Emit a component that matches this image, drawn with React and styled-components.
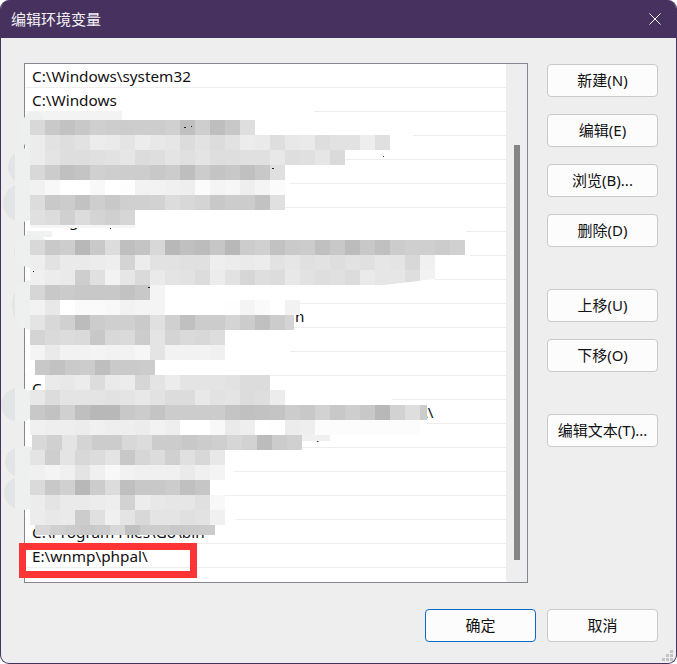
import React from "react";
import styled, { createGlobalStyle } from "styled-components";

const Global = createGlobalStyle`
  html, body { margin: 0; padding: 0; background: #fff; }
  body { font-family: "Noto Sans", "Noto Sans CJK SC", sans-serif; }
`;

const Window = styled.div`
  position: relative;
  width: 677px;
  height: 664px;
  box-sizing: border-box;
  border: 1px solid #47325f;
  border-top: 0;
  border-radius: 9px;
  background: #eeeeee;
  overflow: hidden;
  display: flex;
  flex-direction: column;
`;

const TitleBar = styled.div`
  height: 38px;
  margin: 0 -1px;
  flex: none;
  background: #47325f;
  color: #f4f2f6;
  display: flex;
  align-items: center;
  justify-content: space-between;
  padding: 0 16px 0 11px;
  font: 15px/20px "Noto Sans CJK SC", sans-serif;
`;

const Body = styled.div`
  display: grid;
  grid-template-columns: 504px 111px;
  column-gap: 19px;
  padding: 25px 0 0 23px;
`;

const ListBox = styled.div`
  height: 520px;
  box-sizing: border-box;
  border: 1px solid #84878d;
  background: #fff;
  display: grid;
  grid-template-columns: 1fr 21px;
  overflow: hidden;
`;

const Rows = styled.div`
  display: flex;
  flex-direction: column;
  min-width: 0;
  overflow: hidden;
`;

const Row = styled.div`
  height: 24px;
  flex: none;
  box-sizing: border-box;
  border-bottom: 1px solid #eeeeee;
  padding-left: ${(p) => p.$indent}px;
  font: 15.3px/25px "Noto Sans", sans-serif;
  color: #111;
  white-space: nowrap;
`;

const Track = styled.div`
  background: #eeeeee;
  display: flex;
  justify-content: center;
  padding-top: 81px;
`;

const Thumb = styled.div`
  width: 6px;
  height: 415px;
  background: #858585;
`;

const Side = styled.div`
  display: flex;
  flex-direction: column;
  padding-top: 1px;
`;

const Btn = styled.button`
  width: 111px;
  height: 33px;
  flex: none;
  margin-top: ${(p) => p.$gap}px;
  box-sizing: border-box;
  padding: 0 0 2px;
  border-radius: 4px;
  border: 1px solid ${(p) => (p.$primary ? "#0a6cc4" : "#c9c9c9")};
  background: #fcfcfc;
  color: #111;
  font: 15px/20px "Noto Sans", "Noto Sans CJK SC", sans-serif;
`;

const Footer = styled.div`
  display: flex;
  justify-content: flex-end;
  gap: 11px;
  padding: 26px 18px 0 0;
`;

const Highlight = styled.div`
  position: absolute;
  left: 18px;
  top: 543px;
  width: 178px;
  height: 35px;
  box-sizing: border-box;
  border: 7px solid #ff3535;
`;

const Mosaic = styled.svg`
  position: absolute;
  left: -1px;
  top: 0;
  pointer-events: none;
`;

const Grip = styled.svg`
  position: absolute;
  right: 2px;
  bottom: 1px;
`;

const items = [
  ["C:\\Windows\\system32", 7],
  ["C:\\Windows", 7],
  ["", 7], ["", 7], ["", 7], ["", 7],
  ["g", 44],
  ["", 7],
  ["", 7],
  ["", 7],
  ["n", 270],
  ["", 7], ["", 7],
  ["C", 7],
  ["\\\\", 397],
  ["\\", 288],
  ["", 7], ["", 7], ["", 7],
  ["C:\\Program Files\\Go\\bin", 7],
  ["E:\\wnmp\\phpal\\", 7],
  ["", 7],
];

// Pixelated redaction: [top, first cell x, height, grey tones of the 15px cells]
const bands = [
  [120, 30, 15, "d8 c9 c2 c8 cf cd cc cd cd d0 c0 ce be c8 de"],
  [135, 30, 15, "ec e2 de e2 ec ea e4 ec e8 e6 dc e2 dc e2 ec ea de e8 ea de e2 e2 ee e0"],
  [150, 30, 15, "ec e4 de de e0 e2 e6 dc de e4 e0 e4 de de e0 e0 e8 de e0 e6 da"],
  [165, 30, 15, "d8 cc c0 c4 d0 ce cd cd c8 cc be cc c4 c8 c0 c8 e0"],
  [180, 30, 15, "f1 f8 ff ff f8 ff fd f2 f2 f0 ee fb f4 f6 ee f4 fb"],
  [195, 30, 15, "dc c9 cc c2 ce c8 cf d0 d2 dc d8 d4 c8 cc cc c2 e0"],
  [210, 30, 15, "e0 dc d0 dc d4 d0 d6"],
  [240, 30, 15, "d8 c9 cd b8 c9 dc bf c4 d8 b8 c0 bc c6 b8 cc d0 c2 ca cc c0 c8 bc c8 c0 cc cf cf cc d0"],
  [255, 30, 15, "ee e2 ea ea ec ee d4 ec e2 e2 e0 e0 ee ec ea ec e2 e6 e0 e2 de e2 e0 e6 e4 d8 f0"],
  [270, 30, 15, "f0 ec ea ce e0 f2 e6 da ea e4 e2 dc ec e2 d6 de dc e8 e2 de e0 dc ea e6 e6 de f2"],
  [285, 30, 15, "d6 c8 cb c8 c8 c8 c2 c8 f4"],
  [300, 30, 15, "f2 e8 ff fa fa f8 f2 f4 f4 ff ff ff ff fe f4 fa ff f2"],
  [315, 30, 15, "e4 d8 d0 bc cc cf cf ca e0 d0 c0 cc cc d4 cc c0 cc"],
  [330, 30, 15, "d4 da dc da c8 d8 da cc e4 d4 da d8 dd"],
  [345, 30, 15, "f4 ea f2 f2 f4 f2 f2 f6 e4 f2 f2 f2 f0"],
  [360, 35, 15, "c8 c2 ca cc be ca ca cc"],
  [375, 45, 15, "ea e8 ec dc ea ec d6 e4 ec e4 e4 e4 e2 dc dc"],
  [390, 30, 15, "e8 dc e4 e4 e4 e2 e4 e8 e2 dc dc e8 e2 e4 dc de ec"],
  [405, 30, 15, "c8 c2 d0 bf b8 b8 c8 cc c4 cc cc cc cc c4 c0 c2 c4 cc c8 d2 c8 ce c8 b8 d2 de"],
  [420, 30, 15, "f0 ee ee ec f0 ee ee ec f2 ee ff ff f8 ea ee ff fe ec ee fc fc fc fc fc fc fc"],
  [435, 32, 15, "d8 d0 e4 d4 cc cc d8 dc cc cc c8 cc cf d6 d2 bc cc d0"],
  [450, 30, 15, "e4 ce e4 d8 dc e4 c8 d6 dc d0 e0 d8 e8"],
  [465, 30, 15, "f0 f4 f0 e4 f0 f8 f2 f0 f0 f0 ea f0 f4"],
  [480, 30, 15, "da c8 d0 b8 cc dc bf c8 c8 cc c0 c6"],
  [495, 30, 15, "ec e4 ea ea ec ee d2 ec e8 e6 e6 e0 f8"],
  [510, 30, 15, "ec e8 ea cc e0 f0 e4 d8 e4 e4 e0 e2 f0"],
  [525, 35, 10, "d8 d0 cc c8 cc d8 c0 cc cc c8 ca cc"],
];

// Cut-off cells at the right end of a band: [x, y, width, height, tone]
const partials = [
  [285, 315, 9, 15, "d4"],
  [420, 405, 7, 15, "cc"],
  [302, 435, 28, 6, "f0"],
];

// Brush blobs beyond the cells: [centre x, centre y, rx, ry]
const blobs = [
  [34, 131, 13, 20], [30, 167, 22, 19], [22, 203, 19, 19], [32, 251, 18, 17],
  [32, 305, 20, 25], [19, 405, 18, 17], [24, 462, 19, 16], [23, 493, 19, 17],
];

// Row separators hidden under the white brush: [y, right end]
const hiddenLines = [
  [112, 314], [136, 413], [160, 345], [184, 289], [208, 285], [232, 466], [256, 470],
  [280, 430], [304, 285], [328, 294], [352, 290], [376, 265], [400, 392], [424, 427],
  [448, 270], [472, 233], [496, 220], [520, 236],
];

// Specks of the covered text that show through at the edges of the brush
const specks = [
  [184, 127, 2, 1], [191, 126, 1, 1], [272, 168, 2, 1], [383, 156, 1, 1],
  [110, 228, 1, 1], [148, 287, 2, 1], [33, 271, 1, 1],
];

const toTone = (t) => `#${t}${t}${t}`;

const Pixelated = () => (
  <Mosaic width="677" height="664" viewBox="0 0 677 664">
    <defs>
      <linearGradient id="blob" gradientUnits="userSpaceOnUse" x1="0" x2="677" y1="0" y2="0">
        <stop offset="0.0222" stopColor="#e3e4e6" />
        <stop offset="0.0222" stopColor="#eef0f0" />
      </linearGradient>
    </defs>
    {hiddenLines.map(([y, end]) => (
      <rect key={y} x="26" y={y - 1} width={end - 26} height="3" fill="#fff" />
    ))}
    <rect x="27" y="111" width="95" height="9" fill="#f3f3f3" />
    <rect x="135" y="225" width="331" height="15" fill="#fff" />
    <rect x="30" y="225" width="105" height="3" fill="#f6f6f6" />
    <rect x="27" y="231" width="133" height="9" fill="#fff" />
    <rect x="27" y="231" width="25" height="6" fill="#f1f1f1" />
    {blobs.map(([cx, cy, rx, ry]) => (
      <ellipse key={cy} cx={cx} cy={cy} rx={rx} ry={ry} fill="url(#blob)" />
    ))}
    {bands.flatMap(([y, start, h, tones]) =>
      tones.split(" ").map((t, i) => (
        <rect key={`${y}-${i}`} x={start + i * 15} y={y} width="15" height={h} fill={toTone(t)} />
      ))
    )}
    {partials.map(([x, y, w, h, t]) => (
      <rect key={`p${x}-${y}`} x={x} y={y} width={w} height={h} fill={toTone(t)} />
    ))}
    <polygon points="375,286 435,286 435,279" fill="#fff" />
    {specks.map(([x, y, w, h]) => (
      <rect key={`${x}-${y}`} x={x} y={y} width={w} height={h} fill="#222" />
    ))}
  </Mosaic>
);

const Close = () => (
  <svg width="12" height="12" viewBox="0 0 12 12" fill="none" stroke="#fff" strokeWidth="1">
    <path d="M0.5 0.5L11.5 11.5M11.5 0.5L0.5 11.5" />
  </svg>
);

const gripDots = [[8, 0], [4, 4], [8, 4], [0, 8], [4, 8], [8, 8]];

export default function App() {
  return (
    <Window>
      <Global />
      <TitleBar>
        <span>编辑环境变量</span>
        <Close />
      </TitleBar>
      <Body>
        <ListBox>
          <Rows>
            {items.map(([text, indent], i) => (
              <Row key={i} $indent={indent}>{text}</Row>
            ))}
          </Rows>
          <Track><Thumb /></Track>
        </ListBox>
        <Side>
          <Btn $gap={0}>新建(N)</Btn>
          <Btn $gap={17}>编辑(E)</Btn>
          <Btn $gap={17}>浏览(B)...</Btn>
          <Btn $gap={17}>删除(D)</Btn>
          <Btn $gap={42}>上移(U)</Btn>
          <Btn $gap={17}>下移(O)</Btn>
          <Btn $gap={42}>编辑文本(T)...</Btn>
        </Side>
      </Body>
      <Footer>
        <Btn $gap={0} $primary>确定</Btn>
        <Btn $gap={0}>取消</Btn>
      </Footer>
      <Pixelated />
      <Highlight />
      <Grip width="12" height="12" viewBox="0 0 12 12">
        {gripDots.map(([x, y]) => (
          <rect key={`${x}${y}`} x={x} y={y} width="3" height="3" fill="#c4c4c4" />
        ))}
      </Grip>
    </Window>
  );
}
